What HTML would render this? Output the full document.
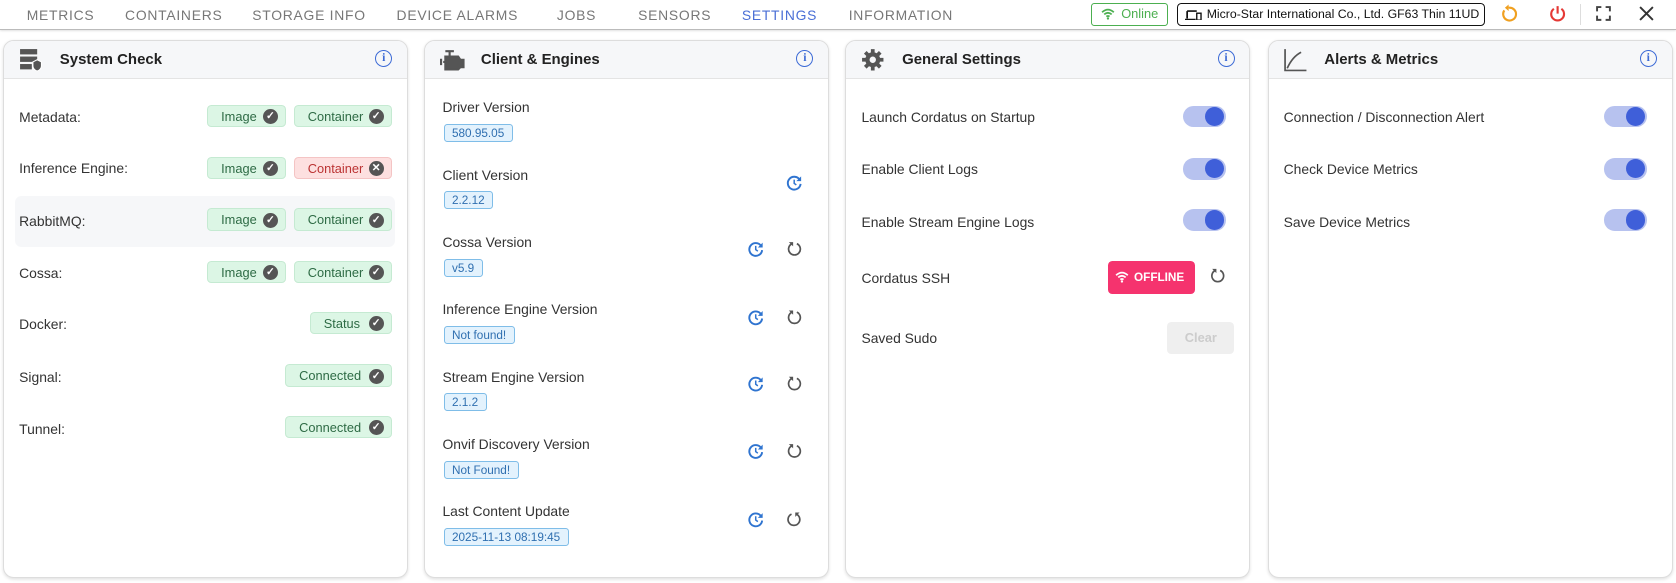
<!DOCTYPE html>
<html><head><meta charset="utf-8"><style>
html,body{margin:0;padding:0;background:#fff;overflow:hidden}
#z{zoom:1.0689;width:1568px;height:545px;position:relative;font-family:"Liberation Sans",Arial,sans-serif;color:#333}
.nav{position:absolute;left:0;top:0;width:1568px;height:27px;border-bottom:1px solid #bbb;box-shadow:0 1px 2px rgba(0,0,0,.15)}
.nav span.t{position:absolute;top:7px;font-size:13px;letter-spacing:0.7px;color:#777}
.card{position:absolute;top:37px;width:377px;height:502px;border:1px solid #ddd;border-radius:10px;box-shadow:0 1px 3px rgba(0,0,0,.12);overflow:hidden;background:#fff}
.hd{height:35px;background:#f6f7f9;border-bottom:1px solid #e4e4e4;position:relative}
.hd b{position:absolute;left:52px;top:10px;font-size:14px;color:#222}
.hd .ic{position:absolute;left:14px;top:7px}
.info{position:absolute;right:14px;top:9px;width:14px;height:14px;border:1.5px solid #3d6bd6;border-radius:50%;color:#3d6bd6;font-size:11px;font-weight:bold;text-align:center;line-height:14px;font-family:"Liberation Serif",serif}
.lbl{position:absolute;font-size:13px;color:#333}
.chip{position:absolute;height:21px;border:1px solid #c5ead2;background:#dcf6e5;border-radius:4px;font-size:12px;color:#2e6b45;line-height:21px;box-sizing:border-box;padding-left:12px}
.chip i{position:absolute;right:7px;top:3px;width:14px;height:14px;border-radius:50%;background:#555;color:#fff;font-style:normal;font-size:10px;font-weight:bold;line-height:14px;text-align:center}
.chip.r{background:#fde0e0;border-color:#f4c4c4;color:#b33}
.ver{position:absolute;height:17px;border:1px solid #7fbde8;background:#e3f2fd;border-radius:3px;font-size:11px;color:#2f6fb0;line-height:16px;padding:0 7px;box-sizing:border-box}
.tg{position:absolute;width:40px;height:20px;border-radius:10px;background:#b7c2ef}
.tg:after{content:"";position:absolute;right:2px;top:1px;width:18px;height:18px;border-radius:50%;background:#3f5fd9}
svg{display:block}
.ib{position:absolute}
</style></head><body><div id="z">
<div class="nav">
<span class="t" style="left:25px">METRICS</span>
<span class="t" style="left:117px">CONTAINERS</span>
<span class="t" style="left:236px">STORAGE INFO</span>
<span class="t" style="left:371px">DEVICE ALARMS</span>
<span class="t" style="left:521px">JOBS</span>
<span class="t" style="left:597px">SENSORS</span>
<span class="t" style="left:694px;color:#4a6fd6">SETTINGS</span>
<span class="t" style="left:794px">INFORMATION</span>
<div style="position:absolute;left:1021px;top:3px;width:72px;height:21px;border:1px solid #4caf50;border-radius:3px;box-sizing:border-box;font-size:12px;color:#4caf50;line-height:19px;padding-left:27px">Online
<svg style="position:absolute;left:8px;top:4px" width="13" height="11" viewBox="0 0 13 11"><path d="M1 4Q6.5-1 12 4M3 6Q6.5 3 10 6M5 8Q6.5 7 8 8" stroke="#4caf50" stroke-width="1.6" fill="none"/><circle cx="6.5" cy="9.8" r="1.1" fill="#4caf50"/></svg></div>
<div style="position:absolute;left:1101px;top:3px;width:288px;height:21px;border:1px solid #111;border-radius:4px;box-sizing:border-box;font-size:11.5px;color:#111;line-height:19px;padding-left:27px;white-space:nowrap;overflow:hidden">Micro-Star International Co., Ltd. GF63 Thin 11UD
<svg style="position:absolute;left:7px;top:5px" width="16" height="10" viewBox="0 0 16 10"><path d="M2 1h9M2 1v7M0 9h10" stroke="#111" stroke-width="1.6" fill="none"/><rect x="11" y="3" width="4" height="6.5" fill="none" stroke="#111" stroke-width="1.3"/></svg></div>
<svg class="ib" style="left:1402px;top:4px" width="18" height="18" viewBox="0 0 18 18"><path d="M5 6A6 6 0 1 0 9 3.5" stroke="#f0a020" stroke-width="2" fill="none"/><path d="M9 0.5v6l-3.5-3z" fill="#f0a020"/></svg>
<svg class="ib" style="left:1448px;top:4px" width="18" height="18" viewBox="0 0 18 18"><path d="M5.5 4.5A6 6 0 1 0 12.5 4.5" stroke="#e53935" stroke-width="2" fill="none"/><path d="M9 2v7" stroke="#e53935" stroke-width="2"/></svg>
<div style="position:absolute;left:1478px;top:4px;width:1px;height:19px;background:#ddd"></div>
<svg class="ib" style="left:1493px;top:6px" width="14" height="14" viewBox="0 0 14 14"><path d="M1 5V1h4M9 1h4v4M13 9v4H9M5 13H1V9" stroke="#444" stroke-width="1.8" fill="none"/></svg>
<svg class="ib" style="left:1533px;top:6px" width="14" height="14" viewBox="0 0 14 14"><path d="M1 1L13 13M13 1L1 13" stroke="#333" stroke-width="1.8"/></svg>
</div>

<!-- card 1 -->
<div class="card" style="left:3px">
<div class="hd"><svg class="ic" width="22" height="22" viewBox="0 0 22 22"><rect x="1" y="1" width="16" height="5" fill="#555"/><rect x="1" y="8" width="16" height="5" fill="#555"/><rect x="1" y="15" width="11" height="5" fill="#555"/><path d="M17 11l4 2v4c0 2-2 4-4 4.5-2-.5-4-2.5-4-4.5v-4z" fill="#555" stroke="#fff" stroke-width="1"/></svg><b>System Check</b><div class="info">i</div></div>
<div style="position:absolute;left:10px;top:145px;width:356px;height:48px;background:#f6f7f9;border-radius:6px"></div>
<div class="lbl" style="left:14px;top:64px">Metadata:</div>
<div class="chip" style="left:190px;top:60px;width:74px">Image<i>✓</i></div><div class="chip" style="left:271px;top:60px;width:92px">Container<i>✓</i></div>
<div class="lbl" style="left:14px;top:112px">Inference Engine:</div>
<div class="chip" style="left:190px;top:109px;width:74px">Image<i>✓</i></div><div class="chip r" style="left:271px;top:109px;width:92px">Container<i style="background:#555">✕</i></div>
<div class="lbl" style="left:14px;top:161px">RabbitMQ:</div>
<div class="chip" style="left:190px;top:157px;width:74px">Image<i>✓</i></div><div class="chip" style="left:271px;top:157px;width:92px">Container<i>✓</i></div>
<div class="lbl" style="left:14px;top:210px">Cossa:</div>
<div class="chip" style="left:190px;top:206px;width:74px">Image<i>✓</i></div><div class="chip" style="left:271px;top:206px;width:92px">Container<i>✓</i></div>
<div class="lbl" style="left:14px;top:258px">Docker:</div>
<div class="chip" style="left:286px;top:254px;width:77px">Status<i>✓</i></div>
<div class="lbl" style="left:14px;top:307px">Signal:</div>
<div class="chip" style="left:263px;top:303px;width:100px">Connected<i>✓</i></div>
<div class="lbl" style="left:14px;top:356px">Tunnel:</div>
<div class="chip" style="left:263px;top:351px;width:100px">Connected<i>✓</i></div>
</div>

<!-- card 2 -->
<div class="card" style="left:397px">
<div class="hd"><svg class="ic" width="24" height="22" viewBox="0 0 24 22"><path d="M5 3h8M9 3v4M1 10v6M3 13h2M5 8h12l2 3h3v7h-3l-2 2H5z" stroke="#555" stroke-width="2" fill="#555"/></svg><b>Client &amp; Engines</b><div class="info">i</div></div>
<div class="lbl" style="left:16px;top:55px">Driver Version</div><div class="ver" style="left:17px;top:78px">580.95.05</div>
<div class="lbl" style="left:16px;top:118px">Client Version</div><div class="ver" style="left:17px;top:141px">2.2.12</div>
<div class="lbl" style="left:16px;top:181px">Cossa Version</div><div class="ver" style="left:17px;top:204px">v5.9</div>
<div class="lbl" style="left:16px;top:244px">Inference Engine Version</div><div class="ver" style="left:17px;top:267px">Not found!</div>
<div class="lbl" style="left:16px;top:307px">Stream Engine Version</div><div class="ver" style="left:17px;top:330px">2.1.2</div>
<div class="lbl" style="left:16px;top:370px">Onvif Discovery Version</div><div class="ver" style="left:17px;top:393px">Not Found!</div>
<div class="lbl" style="left:16px;top:433px">Last Content Update</div><div class="ver" style="left:17px;top:456px">2025-11-13 08:19:45</div>
</div>

<!-- card 3 -->
<div class="card" style="left:791px">
<div class="hd"><svg class="ic" width="22" height="22" viewBox="0 0 22 22"><circle cx="11" cy="11" r="7" fill="#555"/><g stroke="#555" stroke-width="3.5"><path d="M11 1v20M1 11h20M4 4l14 14M18 4L4 18"/></g><circle cx="11" cy="11" r="3" fill="#f6f7f9"/></svg><b>General Settings</b><div class="info">i</div></div>
<div class="lbl" style="left:14px;top:64px">Launch Cordatus on Startup</div><div class="tg" style="left:315px;top:61px"></div>
<div class="lbl" style="left:14px;top:113px">Enable Client Logs</div><div class="tg" style="left:315px;top:110px"></div>
<div class="lbl" style="left:14px;top:162px">Enable Stream Engine Logs</div><div class="tg" style="left:315px;top:158px"></div>
<div class="lbl" style="left:14px;top:215px">Cordatus SSH</div>
<div style="position:absolute;left:245px;top:206px;width:81px;height:31px;background:#f5336e;border-radius:4px;color:#fff;font-size:11px;font-weight:bold;line-height:31px;padding-left:24px;box-sizing:border-box">OFFLINE<svg style="position:absolute;left:6px;top:10px" width="13" height="11" viewBox="0 0 13 11"><path d="M1 4Q6.5-1 12 4M3 6Q6.5 3 10 6M5 8Q6.5 7 8 8" stroke="#fff" stroke-width="1.6" fill="none"/><circle cx="6.5" cy="9.8" r="1.1" fill="#fff"/></svg></div>
<div class="lbl" style="left:14px;top:271px">Saved Sudo</div>
<div style="position:absolute;left:300px;top:263px;width:63px;height:30px;background:#efefef;border-radius:4px;color:#ccc;font-size:12px;font-weight:bold;text-align:center;line-height:30px">Clear</div>
</div>

<!-- card 4 -->
<div class="card" style="left:1186px">
<div class="hd"><svg class="ic" width="22" height="22" viewBox="0 0 22 22"><path d="M1 1v20h20M3 19Q8 8 16 4" stroke="#555" stroke-width="1.6" fill="none"/></svg><b>Alerts &amp; Metrics</b><div class="info">i</div></div>
<div class="lbl" style="left:14px;top:64px">Connection / Disconnection Alert</div><div class="tg" style="left:314px;top:61px"></div>
<div class="lbl" style="left:14px;top:113px">Check Device Metrics</div><div class="tg" style="left:314px;top:110px"></div>
<div class="lbl" style="left:14px;top:162px">Save Device Metrics</div><div class="tg" style="left:314px;top:158px"></div>
</div>

<svg style="position:absolute;left:0;top:0" width="1568" height="545">
<defs>
<g id="up"><path d="M5 -3A6 6 0 1 0 6 1" stroke="#2f74d0" stroke-width="1.8" fill="none"/><path d="M6.5 -6v4.5h-4.5z" fill="#2f74d0"/><path d="M0 -3v3.5l2 1.5" stroke="#2f74d0" stroke-width="1.4" fill="none"/></g>
<g id="rs"><path d="M-2 -5A5.5 5.5 0 1 0 2.5 -5" stroke="#555" stroke-width="1.6" fill="none"/><path d="M-5 -6.5h4v4z" fill="#555"/></g>
<g id="rf"><path d="M-2 -5A5.5 5.5 0 1 0 2.5 -5" stroke="#555" stroke-width="1.6" fill="none" transform="scale(-1,1)"/><path d="M5 -6.5h-4v4z" fill="#555"/></g>
</defs>
<use href="#up" x="743" y="171"/>
<use href="#up" x="707" y="233"/><use href="#rs" x="743" y="233"/>
<use href="#up" x="707" y="297"/><use href="#rs" x="743" y="297"/>
<use href="#up" x="707" y="359"/><use href="#rs" x="743" y="359"/>
<use href="#up" x="707" y="422"/><use href="#rs" x="743" y="422"/>
<use href="#up" x="707" y="486"/><use href="#rf" x="743" y="486"/>
<use href="#rs" x="1139" y="258"/>
</svg>
</div></body></html>
